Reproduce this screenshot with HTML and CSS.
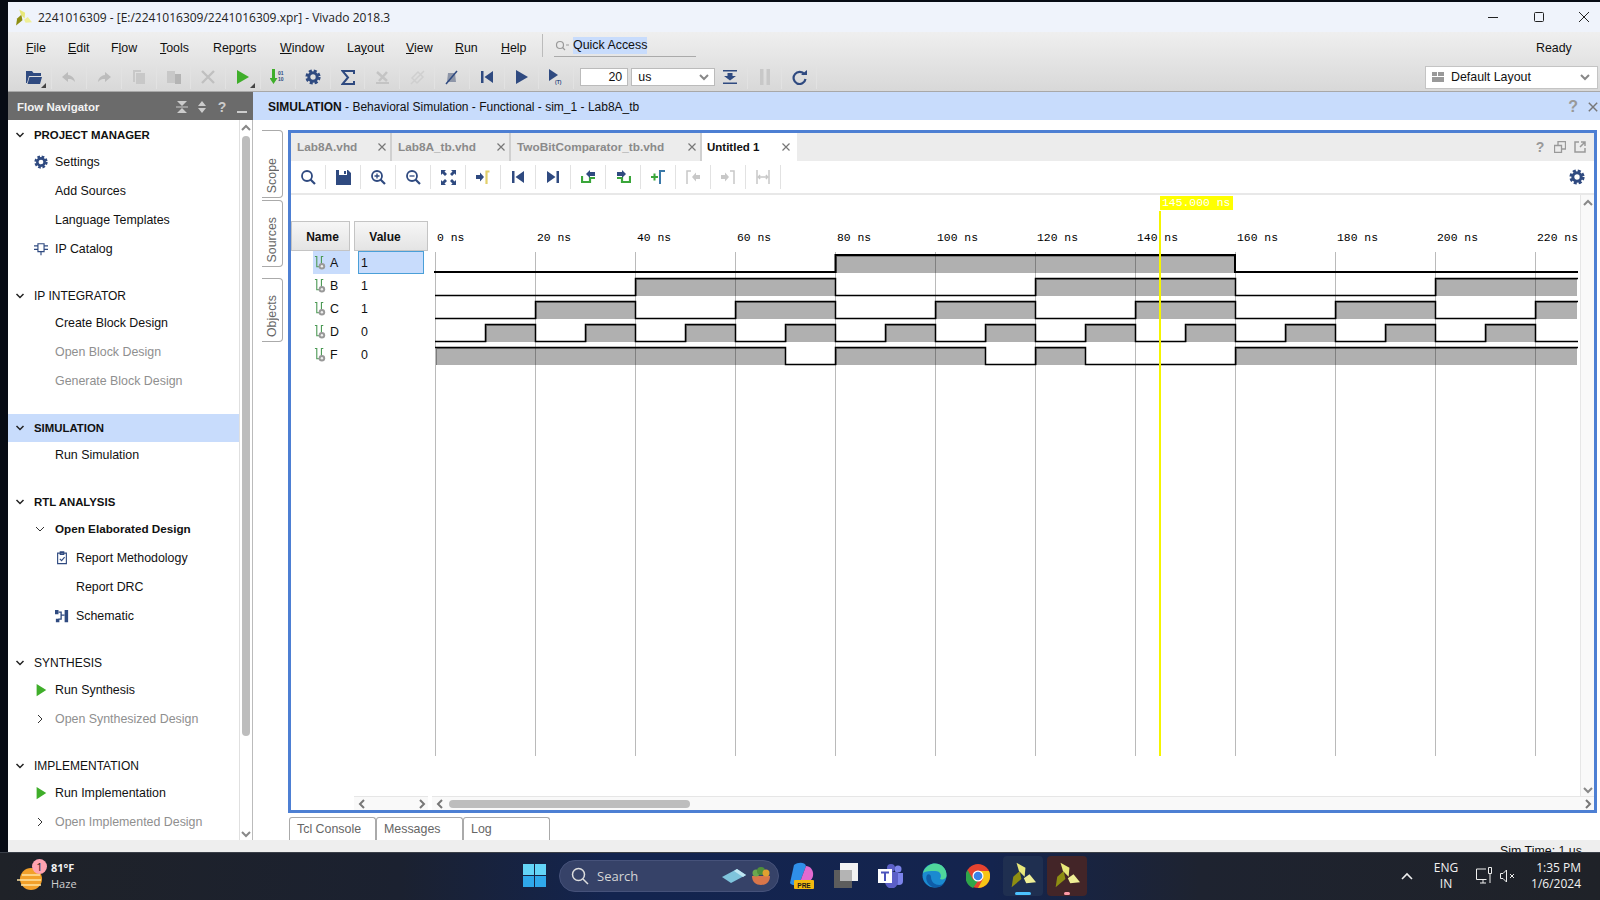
FILE: index.html
```html
<!DOCTYPE html>
<html lang="en">

<head>
  <meta charset="UTF-8">
  <title>2241016309 - Vivado 2018.3</title>
  <link rel="stylesheet" href="styles.css">
</head>

<body>
  <!-- shared icons -->
  <svg class="defs" width="0" height="0">
    <symbol id="logo" viewBox="0 0 16 16">
      <path fill="#8e8e12" d="M1 15.500 2 9 6 5.500 7 10.500z" />
      <path fill="#e8e87a" d="M4 .5 9.500 3.500 9 9 5.500 5.500z" />
      <path fill="#efef96" d="M8.500 10 12 7.500 16 12.500 10 13z" />
    </symbol>
    <symbol id="chev" viewBox="0 0 10 10">
      <path fill="none" stroke="#222" stroke-width="1.500" d="M1.500 3 5 6.500 8.500 3" />
    </symbol>
    <symbol id="chev-thin" viewBox="0 0 10 10">
      <path fill="none" stroke="#333" stroke-width="1" d="M1 3 5 7 9 3" />
    </symbol>
    <symbol id="chev-right" viewBox="0 0 10 10">
      <path fill="none" stroke="#333" stroke-width="1" d="M3 1 7 5 3 9" />
    </symbol>
    <symbol id="arrow-up" viewBox="0 0 10 10">
      <path fill="none" stroke="#888" stroke-width="2" d="M1 7 5 3 9 7" />
    </symbol>
    <symbol id="arrow-down" viewBox="0 0 10 10">
      <path fill="none" stroke="#888" stroke-width="2" d="M1 3 5 7 9 3" />
    </symbol>
    <symbol id="arrow-left" viewBox="0 0 10 10">
      <path fill="none" stroke="#777" stroke-width="2" d="M7 1 3 5 7 9" />
    </symbol>
    <symbol id="arrow-right" viewBox="0 0 10 10">
      <path fill="none" stroke="#777" stroke-width="2" d="M3 1 7 5 3 9" />
    </symbol>
    <symbol id="gear" viewBox="0 0 16 16">
      <circle cx="8" cy="8" r="4.200" fill="none" stroke="#2f4a80" stroke-width="3" />
      <circle cx="8" cy="8" r="6.300" fill="none" stroke="#2f4a80" stroke-width="2.600" stroke-dasharray="3 1.950" />
    </symbol>
    <symbol id="close" viewBox="0 0 10 10">
      <path stroke="#777" stroke-width="1.200" d="M1.500 1.500 8.500 8.500M8.500 1.500 1.500 8.500" />
    </symbol>
    <symbol id="play" viewBox="0 0 16 16">
      <path fill="#3fae2a" d="M3 1 14 8 3 15z" />
    </symbol>
    <symbol id="first" viewBox="0 0 16 16">
      <path fill="#2f4a80" d="M2 2h2.500v12H2zM14 2v12L5.500 8z" />
    </symbol>
    <symbol id="last" viewBox="0 0 16 16">
      <path fill="#2f4a80" d="M14 2h-2.500v12H14zM2 2v12l8.500-6z" />
    </symbol>
    <symbol id="signal" viewBox="0 0 14 16">
      <path fill="none" stroke="#4c9a55" stroke-width="1.200" d="M1 1h2v11h3M10 1h-2v10" />
      <circle cx="8.500" cy="11.500" r="3.500" fill="#999" />
      <circle cx="8.500" cy="11.500" r="1.300" fill="#eee" />
    </symbol>
    <symbol id="magnifier" viewBox="0 0 16 16">
      <circle cx="7" cy="7" r="5" fill="none" stroke="#2f4a80" stroke-width="1.800" />
      <path stroke="#2f4a80" stroke-width="2.200" d="M10.500 10.500 15 15" />
    </symbol>
    <symbol id="bowl" viewBox="0 0 22 20">
      <path fill="#d9764a" d="M2 10h18c0 6-4 9-9 9s-9-3-9-9z" />
      <circle cx="6" cy="7" r="3.500" fill="#6aa84f" />
      <circle cx="11" cy="5" r="4" fill="#4f8f3a" />
      <circle cx="16" cy="7" r="3.500" fill="#e0a030" />
    </symbol>
  </svg>

  <div class="window">
    <header class="titlebar">
      <svg class="title-logo"><use href="#logo" /></svg>
      <span class="title-text">2241016309 - [E:/2241016309/2241016309.xpr] - Vivado 2018.3</span>
      <div class="win-btns">
        <svg width="12" height="12" viewBox="0 0 12 12"><path stroke="#222" d="M1 6.500h10" /></svg>
        <svg width="12" height="12" viewBox="0 0 12 12"><rect x="1.500" y="1.500" width="9" height="9" rx="1" fill="none" stroke="#222" /></svg>
        <svg width="12" height="12" viewBox="0 0 12 12"><path stroke="#222" d="M1 1 11 11M11 1 1 11" /></svg>
      </div>
    </header>

    <div class="topbar">
      <nav class="menubar">
        <a class="m-file"><u>F</u>ile</a>
        <a class="m-edit"><u>E</u>dit</a>
        <a class="m-flow">F<u>l</u>ow</a>
        <a class="m-tools"><u>T</u>ools</a>
        <a class="m-reports">Rep<u>o</u>rts</a>
        <a class="m-window"><u>W</u>indow</a>
        <a class="m-layout">La<u>y</u>out</a>
        <a class="m-view"><u>V</u>iew</a>
        <a class="m-run"><u>R</u>un</a>
        <a class="m-help"><u>H</u>elp</a>
        <div class="quick">
          <svg width="14" height="12" viewBox="0 0 14 12">
            <circle cx="5" cy="5" r="3.500" fill="none" stroke="#999" stroke-width="1.200" />
            <path stroke="#999" stroke-width="1.200" d="M7.500 7.500 10 10M11 5h3" />
          </svg>
          <span class="quick-text">Quick Access</span>
        </div>
        <span class="ready">Ready</span>
      </nav>

      <div class="toolbar">
        <span class="tool corner">
          <svg width="16" height="15" viewBox="0 0 16 15"><path fill="#2f4a80" d="M0 1h6l1.500 2H15v3H3L1 13H0z" /><path fill="#2f4a80" d="M3.500 7H16l-2 7H1.500z" /></svg>
        </span>
        <span class="tool">
          <svg width="16" height="12" viewBox="0 0 16 12"><path fill="#bcbcbc" d="M7 1 1 6l6 5V8c3 0 5 .5 7 3-.5-4-3-6.500-7-7z" /></svg>
        </span>
        <span class="tool">
          <svg width="16" height="12" viewBox="0 0 16 12"><path fill="#bcbcbc" d="M9 1l6 5-6 5V8c-3 0-5 .5-7 3 .5-4 3-6.500 7-7z" /></svg>
        </span>
        <span class="tool">
          <svg width="12" height="14" viewBox="0 0 12 14"><path fill="#c8c8c8" d="M0 0h8v2H2v10H0z" /><path fill="#c8c8c8" d="M3 3h9v11H3z" /></svg>
        </span>
        <span class="tool">
          <svg width="14" height="14" viewBox="0 0 14 14"><path fill="#c8c8c8" d="M0 1h8v12H0z" /><path fill="#b4b4b4" d="M8 4h6v10H8z" /></svg>
        </span>
        <span class="tool">
          <svg width="14" height="14" viewBox="0 0 14 14"><path stroke="#c0c0c0" stroke-width="2.400" d="M1 1 13 13M13 1 1 13" /></svg>
        </span>
        <span class="tool corner">
          <svg width="14" height="16" viewBox="0 0 14 16"><path fill="#3fae2a" d="M1 1 13 8 1 15z" /></svg>
        </span>
        <span class="tool">
          <svg width="16" height="16" viewBox="0 0 16 16"><path fill="#3fae2a" d="M2 0h3v9h2.500L3.500 15-.5 9H2z" /><text class="bits" x="8" y="6">01</text><text class="bits" x="8" y="12">10</text></svg>
        </span>
        <span class="tool"><svg width="16" height="16"><use href="#gear" /></svg></span>
        <span class="tool">
          <svg width="14" height="15" viewBox="0 0 14 15"><path fill="none" stroke="#2f4a80" stroke-width="2" d="M13 4V1H1.500L7 7.500 1.500 14H13v-3" /></svg>
        </span>
        <span class="tool">
          <svg width="15" height="15" viewBox="0 0 15 15"><path fill="#c4c4c4" d="M1 12h13v2H1z" /><path stroke="#c4c4c4" stroke-width="2.500" d="M2 2 12 11M12 2 4 11" /></svg>
        </span>
        <span class="tool">
          <svg width="15" height="15" viewBox="0 0 15 15"><path fill="none" stroke="#cfcfcf" stroke-width="1.500" d="M2 8 8 2l5 5-6 6zM1 14 14 1" /></svg>
        </span>
        <span class="tool">
          <svg width="15" height="15" viewBox="0 0 15 15"><path fill="#8e96a8" d="M4 3h7l1 9H3z" /><path stroke="#2f4a80" stroke-width="1.500" d="M2 14 13 1" /></svg>
        </span>
        <span class="tool"><svg width="16" height="16"><use href="#first" /></svg></span>
        <span class="tool">
          <svg width="14" height="14" viewBox="0 0 14 14"><path fill="#2f4a80" d="M1 0 13 7 1 14z" /></svg>
        </span>
        <span class="tool">
          <svg width="16" height="16" viewBox="0 0 16 16"><path fill="#2f4a80" d="M1 0 10 6 1 12z" /><text class="bits" x="7" y="15">(T)</text></svg>
        </span>

        <div class="run-time">
          <span class="num-input">20</span>
          <span class="unit-select">us
            <svg width="12" height="10"><use href="#arrow-down" /></svg>
          </span>
        </div>
        <span class="tool t-first">
          <svg width="14" height="14" viewBox="0 0 14 14"><path fill="#2f4a80" d="M0 0h14v1.500H0zM4.500 3h5v3H13L7 10.500 1 6h3.500zM0 12.500h14V14H0z" /></svg>
        </span>
        <span class="tool t-second">
          <svg width="10" height="16" viewBox="0 0 10 16"><path fill="#c8c8c8" d="M0 0h3.500v16H0zM6.500 0H10v16H6.500z" /></svg>
        </span>
        <span class="tool t-third">
          <svg width="15" height="15" viewBox="0 0 15 15"><path fill="none" stroke="#2f4a80" stroke-width="2.200" d="M12.500 4.500A6 6 0 1 0 13.500 9" /><path fill="#2f4a80" d="M9 5h6V0z" /></svg>
        </span>

        <div class="layout-select">
          <svg width="12" height="10" viewBox="0 0 12 10"><path fill="#999" d="M0 0h5v4H0zM6 0h6v4H6zM0 5h12v5H0z" /></svg>
          <span>Default Layout</span>
          <svg class="layout-arrow" width="12" height="10"><use href="#arrow-down" /></svg>
        </div>
      </div>
    </div>

    <div class="work">
      <aside class="flow-nav">
        <div class="flow-head">
          <span>Flow Navigator</span>
          <div class="flow-icons">
            <svg width="12" height="12" viewBox="0 0 12 12"><path fill="#ccc" d="M1 0h10L6 5zM1 12h10L6 7zM0 5.500h12v1H0z" /></svg>
            <svg width="12" height="12" viewBox="0 0 12 12"><path fill="#ccc" d="M2 5h8L6 0zM2 7h8l-4 5z" /></svg>
            <b>?</b>
            <svg width="12" height="12" viewBox="0 0 12 12"><path fill="#ccc" d="M1 10h10v2H1z" /></svg>
          </div>
        </div>
        <div class="flow-body">
          <div class="flow-list">
            <section class="nav-section">
              <h4 class="nav-head strong"><svg><use href="#chev" /></svg>PROJECT MANAGER</h4>
              <a class="nav-item">
                <svg class="nav-icon"><use href="#gear" /></svg>Settings
              </a>
              <a class="nav-item">Add Sources</a>
              <a class="nav-item">Language Templates</a>
              <a class="nav-item">
                <svg class="nav-icon" viewBox="0 0 16 16"><path fill="none" stroke="#2f4a80" stroke-width="1.300" d="M4.500 2h7v9h-7zM8 11v4M0 4.500h4.500M0 8.500h4.500M11.500 4.500H16M11.500 8.500H16" /></svg>IP Catalog
              </a>
            </section>
            <section class="nav-section">
              <h4 class="nav-head"><svg><use href="#chev" /></svg>IP INTEGRATOR</h4>
              <a class="nav-item">Create Block Design</a>
              <a class="nav-item off">Open Block Design</a>
              <a class="nav-item off">Generate Block Design</a>
            </section>
            <section class="nav-section">
              <h4 class="nav-head strong current"><svg><use href="#chev" /></svg>SIMULATION</h4>
              <a class="nav-item">Run Simulation</a>
            </section>
            <section class="nav-section">
              <h4 class="nav-head strong"><svg><use href="#chev" /></svg>RTL ANALYSIS</h4>
              <a class="nav-item bold">
                <svg class="nav-toggle"><use href="#chev-thin" /></svg>Open Elaborated Design
              </a>
              <a class="nav-item sub">
                <svg class="nav-icon" viewBox="0 0 16 16"><path fill="none" stroke="#2f4a80" stroke-width="1.300" d="M3 2.500h10v12H3zM6 1h4v3H6zM5.500 9l2 2 3.500-4" /></svg>Report Methodology
              </a>
              <a class="nav-item sub">Report DRC</a>
              <a class="nav-item sub">
                <svg class="nav-icon" viewBox="0 0 16 16"><path fill="#2f4a80" d="M0 1h4v5H0zM11 1h4v14h-4zM1 11h4v4H1z" /><path fill="none" stroke="#2f4a80" stroke-width="1.500" d="M4 3.500h3v8H4M7 7h4" /></svg>Schematic
              </a>
            </section>
            <section class="nav-section">
              <h4 class="nav-head"><svg><use href="#chev" /></svg>SYNTHESIS</h4>
              <a class="nav-item">
                <svg class="nav-icon"><use href="#play" /></svg>Run Synthesis
              </a>
              <a class="nav-item off">
                <svg class="nav-toggle"><use href="#chev-right" /></svg>Open Synthesized Design
              </a>
            </section>
            <section class="nav-section">
              <h4 class="nav-head"><svg><use href="#chev" /></svg>IMPLEMENTATION</h4>
              <a class="nav-item">
                <svg class="nav-icon"><use href="#play" /></svg>Run Implementation
              </a>
              <a class="nav-item off">
                <svg class="nav-toggle"><use href="#chev-right" /></svg>Open Implemented Design
              </a>
            </section>
          </div>
          <div class="flow-scroll">
            <svg width="10" height="10"><use href="#arrow-up" /></svg>
            <div class="flow-track"><div class="flow-thumb"></div></div>
            <svg width="10" height="10"><use href="#arrow-down" /></svg>
          </div>
        </div>
      </aside>

      <main class="sim">
        <div class="sim-head">
          <span><b>SIMULATION</b> - Behavioral Simulation - Functional - sim_1 - Lab8A_tb</span>
          <div class="sim-head-icons">
            <b>?</b>
            <svg width="12" height="12"><use href="#close" /></svg>
          </div>
        </div>
        <div class="sim-body">
          <div class="side-tabs">
            <div class="side-tab t-scope"><span>Scope</span></div>
            <div class="side-tab t-sources"><span>Sources</span></div>
            <div class="side-tab t-objects"><span>Objects</span></div>
          </div>

          <div class="frame-col">
            <div class="frame">
              <div class="tabs">
                <div class="tab w1"><span>Lab8A.vhd</span><svg width="10" height="10"><use href="#close" /></svg></div>
                <div class="tab w2"><span>Lab8A_tb.vhd</span><svg width="10" height="10"><use href="#close" /></svg></div>
                <div class="tab w3"><span>TwoBitComparator_tb.vhd</span><svg width="10" height="10"><use href="#close" /></svg></div>
                <div class="tab w4 active"><span>Untitled 1</span><svg width="10" height="10"><use href="#close" /></svg></div>
                <div class="tabs-right">
                  <b>?</b>
                  <svg width="12" height="12" viewBox="0 0 12 12"><path fill="none" stroke="#999" stroke-width="1.300" d="M.5 4.500h7v7h-7zM4 4.500V.5h7.500V8H7.500" /></svg>
                  <svg width="12" height="12" viewBox="0 0 12 12"><path fill="none" stroke="#999" stroke-width="1.500" d="M5 1H1v10h10V7M6 6l5-5M7 1h4v4" /></svg>
                </div>
              </div>

              <div class="wave-tools">
                <span class="wtool"><svg width="16" height="16"><use href="#magnifier" /></svg></span>
                <span class="wtool"><svg width="15" height="15" viewBox="0 0 15 15"><path fill="#2f4a80" d="M0 0h12l3 3v12H0zM3 0v5h8V0zM8 1h2v3H8z" fill-rule="evenodd" /></svg></span>
                <span class="wtool"><svg width="16" height="16" viewBox="0 0 16 16"><use href="#magnifier" /><path stroke="#2f4a80" stroke-width="1.300" d="M4.500 7h5M7 4.500v5" /></svg></span>
                <span class="wtool"><svg width="16" height="16" viewBox="0 0 16 16"><use href="#magnifier" /><path stroke="#2f4a80" stroke-width="1.300" d="M4.500 7h5" /></svg></span>
                <span class="wtool"><svg width="15" height="15" viewBox="0 0 15 15"><path fill="#2f4a80" d="M0 0h5L3.500 1.500 6 4 4 6 1.500 3.500 0 5zM15 0v5l-1.500-1.500L11 6 9 4l2.500-2.500L10 0zM0 15v-5l1.500 1.500L4 9l2 2-2.500 2.500L5 15zM15 15h-5l1.500-1.500L9 11l2-2 2.500 2.500L15 10z" /></svg></span>
                <span class="wtool"><svg width="14" height="14" viewBox="0 0 14 14"><path fill="#2f4a80" d="M0 5h4V2.500L8 7 4 11.500V9H0z" /><path fill="none" stroke="#e2cf6a" stroke-width="2.200" d="M13.500 1.500h-3V14" /></svg></span>
                <span class="wtool"><svg width="16" height="16"><use href="#first" /></svg></span>
                <span class="wtool"><svg width="16" height="16"><use href="#last" /></svg></span>
                <span class="wtool"><svg width="15" height="14" viewBox="0 0 15 14"><path fill="none" stroke="#3aa63a" stroke-width="2.200" d="M1 6v6h8V8h5" /><path fill="#2f4a80" d="M14 2v4H9v2L5 4l4-4v2z" /></svg></span>
                <span class="wtool"><svg width="15" height="14" viewBox="0 0 15 14"><path fill="none" stroke="#3aa63a" stroke-width="2.200" d="M14 6v6H6V8H1" /><path fill="#2f4a80" d="M1 2v4h5v2l4-4-4-4v2z" /></svg></span>
                <span class="wtool"><svg width="14" height="14" viewBox="0 0 14 14"><path stroke="#3aa63a" stroke-width="2" d="M0 7h7M3.500 3.500v7" /><path fill="none" stroke="#3a78a8" stroke-width="2" d="M14 1H9v13" /></svg></span>
                <span class="wtool"><svg width="14" height="14" viewBox="0 0 14 14"><path fill="none" stroke="#c8c8c8" stroke-width="1.500" d="M5 1H1v13" /><path fill="#c8c8c8" d="M14 5h-4V2.500L6 7l4 4.500V9h4z" /></svg></span>
                <span class="wtool"><svg width="14" height="14" viewBox="0 0 14 14"><path fill="#c8c8c8" d="M0 5h4V2.500L8 7 4 11.500V9H0z" /><path fill="none" stroke="#c8c8c8" stroke-width="1.500" d="M9 1h4v13" /></svg></span>
                <span class="wtool"><svg width="14" height="14" viewBox="0 0 14 14"><path fill="none" stroke="#c8c8c8" stroke-width="1.500" d="M1 0v14M13 0v14M2.500 7h9M4 5 2.500 7 4 9M10 5l1.500 2L10 9" /></svg></span>
                <span class="wtool-gear"><svg width="16" height="16"><use href="#gear" /></svg></span>
              </div>

              <div class="viewer">
                <div class="signals">
                  <div class="sig-head">
                    <div class="col-btn c-name">Name</div>
                    <div class="col-btn c-value">Value</div>
                  </div>
                  <div class="sig-row selected">
                    <div class="sig-name"><svg><use href="#signal" /></svg>A</div>
                    <div class="sig-val">1</div>
                  </div>
                  <div class="sig-row">
                    <div class="sig-name"><svg><use href="#signal" /></svg>B</div>
                    <div class="sig-val">1</div>
                  </div>
                  <div class="sig-row">
                    <div class="sig-name"><svg><use href="#signal" /></svg>C</div>
                    <div class="sig-val">1</div>
                  </div>
                  <div class="sig-row">
                    <div class="sig-name"><svg><use href="#signal" /></svg>D</div>
                    <div class="sig-val">0</div>
                  </div>
                  <div class="sig-row">
                    <div class="sig-name"><svg><use href="#signal" /></svg>F</div>
                    <div class="sig-val">0</div>
                  </div>
                </div>

                <!-- viewBox uses page coordinates, 5px = 1ns, 0ns at x=435 -->
                <svg class="waves" viewBox="430 195 1150 601" width="1150" height="601">
                  <g class="ruler">
                    <text x="437" y="241">0 ns</text>
                    <text x="537" y="241">20 ns</text>
                    <text x="637" y="241">40 ns</text>
                    <text x="737" y="241">60 ns</text>
                    <text x="837" y="241">80 ns</text>
                    <text x="937" y="241">100 ns</text>
                    <text x="1037" y="241">120 ns</text>
                    <text x="1137" y="241">140 ns</text>
                    <text x="1237" y="241">160 ns</text>
                    <text x="1337" y="241">180 ns</text>
                    <text x="1437" y="241">200 ns</text>
                    <text x="1537" y="241">220 ns</text>
                  </g>

                  <g class="w-fill">
                    <path d="M835 256H1235V273H835Z" />
                    <path d="M636 279H835V296H636ZM1036 279H1235V296H1036ZM1436 279H1577V296H1436Z" />
                    <path d="M536 302H635V319H536ZM736 302H835V319H736ZM936 302H1035V319H936ZM1136 302H1235V319H1136ZM1336 302H1435V319H1336ZM1536 302H1577V319H1536Z" />
                    <path d="M486 325H535V342H486ZM586 325H635V342H586ZM686 325H735V342H686ZM786 325H835V342H786ZM886 325H935V342H886ZM986 325H1035V342H986ZM1086 325H1135V342H1086ZM1186 325H1235V342H1186ZM1286 325H1335V342H1286ZM1386 325H1435V342H1386ZM1486 325H1535V342H1486Z" />
                    <path d="M436 348H785V365H436ZM836 348H985V365H836ZM1036 348H1085V365H1036ZM1236 348H1577V365H1236Z" />
                  </g>
                  <g class="w-shade">
                    <path d="M836.500 273V256.500H1234" />
                    <path d="M636.500 296V279.500H835M1036.500 296V279.500H1235M1436.500 296V279.500H1577" />
                    <path d="M536.500 319V302.500H635M736.500 319V302.500H835M936.500 319V302.500H1035M1136.500 319V302.500H1235M1336.500 319V302.500H1435M1536.500 319V302.500H1577" />
                    <path d="M486.500 342V325.500H535M586.500 342V325.500H635M686.500 342V325.500H735M786.500 342V325.500H835M886.500 342V325.500H935M986.500 342V325.500H1035M1086.500 342V325.500H1135M1186.500 342V325.500H1235M1286.500 342V325.500H1335M1386.500 342V325.500H1435M1486.500 342V325.500H1535" />
                    <path d="M436.500 365V348.500H785M836.500 365V348.500H985M1036.500 365V348.500H1085M1236.500 365V348.500H1577" />
                  </g>
                  <path class="grid" d="M435.500 252V756M535.500 252V756M635.500 252V756M735.500 252V756M835.500 252V756M935.500 252V756M1035.500 252V756M1135.500 252V756M1235.500 252V756M1335.500 252V756M1435.500 252V756M1535.500 252V756" />
                  <path class="w-line thick" d="M434 272H835.500V255H1235V272H1578" />
                  <path class="w-line" d="M435 295.500H635.500V278.500H835.500V295.500H1035.500V278.500H1235.500V295.500H1435.500V278.500H1578" />
                  <path class="w-line" d="M435 318.500H535.500V301.500H635.500V318.500H735.500V301.500H835.500V318.500H935.500V301.500H1035.500V318.500H1135.500V301.500H1235.500V318.500H1335.500V301.500H1435.500V318.500H1535.500V301.500H1578" />
                  <path class="w-line" d="M435 341.500H485.500V324.500H535.500V341.500H585.500V324.500H635.500V341.500H685.500V324.500H735.500V341.500H785.500V324.500H835.500V341.500H885.500V324.500H935.500V341.500H985.500V324.500H1035.500V341.500H1085.500V324.500H1135.500V341.500H1185.500V324.500H1235.500V341.500H1285.500V324.500H1335.500V341.500H1385.500V324.500H1435.500V341.500H1485.500V324.500H1535.500V341.500H1578" />
                  <path class="w-line" d="M435 347.500H785.500V364.500H835.500V347.500H985.500V364.500H1035.500V347.500H1085.500V364.500H1235.500V347.500H1578" />

                  <path class="cursor" d="M1160 211V756" />
                  <rect class="cursor-tag" x="1160" y="196" width="73" height="14" />
                  <text class="cursor-text" x="1162" y="206">145.000 ns</text>
                </svg>

                <div class="v-scroll">
                  <svg width="10" height="10"><use href="#arrow-up" /></svg>
                  <svg width="10" height="10"><use href="#arrow-down" /></svg>
                </div>
              </div>

              <div class="h-bars">
                <div class="h-name">
                  <svg width="10" height="10"><use href="#arrow-left" /></svg>
                  <svg width="10" height="10"><use href="#arrow-right" /></svg>
                </div>
                <div class="h-wave">
                  <svg width="10" height="10"><use href="#arrow-left" /></svg>
                  <div class="h-track"><div class="h-thumb"></div></div>
                  <svg width="10" height="10"><use href="#arrow-right" /></svg>
                </div>
              </div>
            </div>

            <div class="bottom-tabs">
              <div class="b-tab">Tcl Console</div>
              <div class="b-tab">Messages</div>
              <div class="b-tab">Log</div>
            </div>
          </div>
        </div>
      </main>
    </div>

    <div class="status"><span>Sim Time: 1 us</span></div>
  </div>

  <footer class="taskbar">
    <div class="weather">
      <div class="sun">
        <svg width="30" height="26" viewBox="0 0 30 26"><circle cx="15" cy="13" r="11" fill="#f2a02a" /><path stroke="#ffe2a0" stroke-width="1.500" d="M6 9h18M1 14h24M5 19h20" /></svg>
        <span class="badge">1</span>
      </div>
      <div class="weather-text"><b>81°F</b><span>Haze</span></div>
    </div>

    <svg class="start" width="23" height="23" viewBox="0 0 23 23">
      <path fill="#63d4f7" d="M0 0h11v11H0zM12 0h11v11H12z" />
      <path fill="#2fa8ea" d="M0 12h11v11H0zM12 12h11v11H12z" />
    </svg>

    <div class="search">
      <svg width="18" height="18" viewBox="0 0 18 18"><circle cx="7.500" cy="7.500" r="6" fill="none" stroke="#ddd" stroke-width="1.500" /><path stroke="#ddd" stroke-width="1.500" d="M12 12l5 5" /></svg>
      <span>Search</span>
      <svg class="search-art" width="26" height="16" viewBox="0 0 26 16"><path fill="#7fc4dc" d="M0 9 15 1l9 6L9 15z" /><path fill="#bfe6f2" d="M15 1l9 6-3 2-9-6z" /></svg>
      <svg width="22" height="20"><use href="#bowl" /></svg>
    </div>

    <span class="app">
      <svg width="26" height="28" viewBox="0 0 26 28">
        <path fill="#2f8fe8" d="M5 3 C9 0 16 0 17 4 L11 20 C8 24 3 24 1 21z" />
        <path fill="#e26ad0" d="M17 4 C21 4 25 8 24 14 C23 18 20 20 17 20 L11 20z" />
        <rect x="5" y="18" width="20" height="9" rx="1" fill="#f2b90f" />
        <text class="pre" x="15" y="25.500">PRE</text>
      </svg>
    </span>
    <span class="app">
      <svg width="24" height="25" viewBox="0 0 24 25"><rect x="0" y="7" width="18" height="18" fill="#5d5d5d" /><rect x="6" y="0" width="18" height="18" fill="#f2f2f2" /><rect x="6" y="7" width="12" height="11" fill="#b4b4b4" /></svg>
    </span>
    <span class="app">
      <svg width="25" height="24" viewBox="0 0 25 24">
        <circle cx="20" cy="5" r="3.500" fill="#7b83eb" /><circle cx="13" cy="4" r="4" fill="#5b5fc7" />
        <path fill="#7b83eb" d="M17 9h8v8a4 4 0 0 1-8 0z" /><path fill="#5b5fc7" d="M7 8h13v10a6 6 0 0 1-13 0z" />
        <rect x="0" y="5" width="14" height="14" fill="#fff" />
        <path fill="#4b53bc" d="M3 7.500h8v2H8V17H6V9.500H3z" />
      </svg>
    </span>
    <span class="app">
      <svg width="25" height="25" viewBox="0 0 25 25">
        <circle cx="12.500" cy="12.500" r="12" fill="#1b8ad0" />
        <path fill="#4fd69c" d="M1 10C3 3 9 .5 13 .5 20 .5 25 6 24.500 13c-.3 3-4 4-6.500 3 2-3 1-8-5-8-5 0-9 0-12 2z" />
        <path fill="#0f5da8" d="M9 14c0 5 4 8 8.500 8 2 0 4-.7 5-2-3 4.500-9 5.500-13 3.500C5 21 3 16 5 12c1-1.500 4-1 4 2z" />
      </svg>
    </span>
    <span class="app">
      <svg width="24" height="24" viewBox="0 0 24 24">
        <circle cx="12" cy="12" r="12" fill="#e5432f" />
        <path fill="#f6c416" d="M12 7h11a12 12 0 0 1-11 17l5-9z" />
        <path fill="#2fa64a" d="M1.600 6 7 15.500l5 1.500-5 7A12 12 0 0 1 1.600 6z" />
        <circle cx="12" cy="12" r="5.500" fill="#fff" /><circle cx="12" cy="12" r="4.300" fill="#3b82e6" />
      </svg>
    </span>
    <span class="pinned blue">
      <svg width="26" height="26"><use href="#logo" /></svg>
      <i></i>
    </span>
    <span class="pinned red">
      <svg width="26" height="26"><use href="#logo" /></svg>
      <i></i>
    </span>

    <div class="tray">
      <svg width="14" height="10" viewBox="0 0 14 10"><path fill="none" stroke="#eee" stroke-width="1.600" d="M2 8 7 3l5 5" /></svg>
      <div class="lang">ENG<br>IN</div>
      <svg width="17" height="17" viewBox="0 0 17 17"><path fill="none" stroke="#eee" d="M10 2H.5v10.500h10M4 16h6M7 13v3" /><path fill="#1d2026" stroke="#eee" d="M12.500.5h3v6h-3zM14 7v9" /></svg>
      <svg width="16" height="14" viewBox="0 0 16 14"><path fill="none" stroke="#eee" d="M.5 4.500h2.500L6.500 1v12L3 9.500H.5zM10 5l4 4M14 5l-4 4" /></svg>
      <div class="clock">1:35 PM<br>1/6/2024</div>
    </div>
  </footer>
</body>

</html>
```
FILE: styles.css
```css
* {
  box-sizing: border-box;
}

body {
  margin: 0;
  width: 1600px;
  height: 900px;
  overflow: hidden;
  background-color: #070b14;
  font-family: "Liberation Sans", Arial, sans-serif;
  font-size: 12.4px;
  color: #111;
  display: flex;
  flex-direction: column;
}

.defs {
  position: absolute;
}

.window {
  flex: 1;
  min-height: 0;
  margin: 2px 0 0 8px;
  display: flex;
  flex-direction: column;
}

/* title bar */
.titlebar {
  height: 30px;
  background-color: #eff3fb;
  display: flex;
  align-items: center;
  font-family: "Open Sans", sans-serif;
  font-size: 12px;
  color: #222;
}

.title-logo {
  width: 17px;
  height: 17px;
  margin-left: 7px;
  margin-right: -1px;
}

.title-text {
  margin-left: 7px;
}

.win-btns {
  margin-left: auto;
  margin-right: 10px;
  display: flex;
  gap: 33.5px;
}

/* menu and toolbar */
.topbar {
  height: 60px;
  background: linear-gradient(#efefef, #d8d8d8);
  border-bottom: 1px solid #a8a8a8;
}

.menubar {
  height: 32px;
  position: relative;
}

.menubar a {
  position: absolute;
  top: 9px;
}

.m-file { left: 18px; }
.m-edit { left: 60px; }
.m-flow { left: 103px; }
.m-tools { left: 152px; }
.m-reports { left: 205px; }
.m-window { left: 272px; }
.m-layout { left: 339px; }
.m-view { left: 398px; }
.m-run { left: 447px; }
.m-help { left: 493px; }

.quick {
  position: absolute;
  left: 534px;
  top: 2px;
  width: 154px;
  height: 23px;
  padding-left: 12px;
  border-left: 1px solid #bbb;
  display: flex;
  align-items: center;
  gap: 4px;
}

.quick::after {
  content: "";
  position: absolute;
  left: 11px;
  right: 0;
  bottom: 0;
  border-bottom: 1px solid #aaa;
}

.quick-text {
  background-color: #c8dcfc;
  padding: 1px 0;
  line-height: 15px;
}

.ready {
  position: absolute;
  left: 1528px;
  top: 9px;
}

.toolbar {
  height: 26px;
  padding: 0 2px 0 9.5px;
  display: flex;
  align-items: center;
}

.tool {
  width: 34.8px;
  height: 24px;
  border-right: 1px solid #e2e2e2;
  display: flex;
  align-items: center;
  justify-content: center;
  position: relative;
}

.corner::after {
  content: "";
  position: absolute;
  right: 5px;
  bottom: 1px;
  border-left: 5px solid transparent;
  border-bottom: 5px solid #444;
}

.bits {
  font-family: "Liberation Sans", sans-serif;
  font-size: 5px;
  font-weight: bold;
  fill: #2f4a80;
}

.run-time {
  margin-left: 6px;
  display: flex;
  gap: 3px;
}

.num-input {
  width: 48px;
  height: 18px;
  line-height: 16px;
  background-color: #fff;
  border: 1px solid #bbb;
  padding-right: 5px;
  text-align: right;
}

.unit-select {
  width: 84px;
  height: 18px;
  line-height: 16px;
  background-color: #fff;
  border: 1px solid #bbb;
  padding: 0 4px 0 6px;
  display: flex;
  align-items: center;
  justify-content: space-between;
}

.t-first { width: 33px; padding-right: 3px; }
.t-second { width: 34px; }
.t-third { width: 35px; }

.layout-select {
  margin-left: auto;
  width: 173px;
  height: 23px;
  background-color: #fff;
  border: 1px solid #c4c4c4;
  padding: 0 6px;
  display: flex;
  align-items: center;
  gap: 7px;
}

.layout-arrow {
  margin-left: auto;
}

/* main area */
.work {
  flex: 1;
  min-height: 0;
  display: flex;
  background-color: #fff;
}

.flow-nav {
  width: 245px;
  border-right: 1px solid #bbb;
  display: flex;
  flex-direction: column;
}

.flow-head {
  height: 28px;
  background-color: #6b6b6b;
  color: #f2f2f2;
  font-size: 11.5px;
  font-weight: bold;
  padding: 1px 0 0 9px;
  margin-right: -1px;
  display: flex;
  align-items: center;
  justify-content: space-between;
}

.flow-icons {
  display: flex;
  align-items: center;
  gap: 8px;
  margin-right: 5px;
}

.flow-icons b {
  width: 12px;
  text-align: center;
  font-size: 14px;
  color: #ccc;
}

.flow-body {
  flex: 1;
  min-height: 0;
  display: flex;
}

.flow-list {
  flex: 1;
  padding-top: 3px;
}

.nav-section {
  margin-bottom: 21px;
}

.nav-head {
  margin: 0;
  height: 24px;
  padding-left: 7px;
  font-size: 12px;
  font-weight: normal;
  display: flex;
  align-items: center;
  gap: 9px;
}

.nav-head svg {
  width: 10px;
  height: 10px;
}

.nav-head.strong {
  font-size: 11.4px;
  font-weight: bold;
}

.nav-head.current {
  height: 28px;
  margin: -2px 0;
  background-color: #c8dcfc;
}

.nav-item {
  height: 29px;
  padding-left: 47px;
  display: flex;
  align-items: center;
  position: relative;
}

.nav-item.sub {
  padding-left: 68px;
}

.nav-item.off {
  color: #8f8f8f;
}

.nav-item.bold {
  font-size: 11.7px;
  font-weight: bold;
}

.nav-icon {
  position: absolute;
  left: 26px;
  width: 14px;
  height: 14px;
}

.nav-item.sub .nav-icon {
  left: 47px;
}

.nav-toggle {
  position: absolute;
  left: 27px;
  width: 10px;
  height: 10px;
}

.flow-scroll {
  width: 13px;
  border-left: 1px solid #e0e0e0;
  background-color: #fff;
  padding-top: 3px;
  padding-bottom: 1px;
  display: flex;
  flex-direction: column;
  align-items: center;
  gap: 1px;
}

.flow-track {
  flex: 1;
  padding-top: 2px;
}

.flow-thumb {
  width: 8px;
  height: 600px;
  border-radius: 4px;
  background-color: #bdbdbd;
}

.sim {
  flex: 1;
  min-width: 0;
  display: flex;
  flex-direction: column;
}

.sim-head {
  height: 28px;
  flex: none;
  background-color: #c8dcfc;
  padding: 1px 0 0 15px;
  display: flex;
  align-items: center;
  justify-content: space-between;
  font-size: 12px;
}

.sim-head-icons {
  display: flex;
  align-items: center;
  gap: 9px;
  margin-right: 1px;
}

.sim-head-icons b {
  font-size: 16px;
  color: #999;
}

.sim-body {
  flex: 1;
  min-height: 0;
  display: flex;
}

/* vertical tabs */
.side-tabs {
  width: 35px;
  padding: 10px 0 0 9px;
}

.side-tab {
  width: 21px;
  border: 1px solid #aaa;
  border-left: none;
  border-radius: 0 4px 4px 0;
  color: #666;
  font-size: 12.4px;
  padding-bottom: 4px;
  display: flex;
  align-items: flex-end;
  justify-content: center;
}

.side-tab span {
  writing-mode: vertical-rl;
  transform: rotate(180deg);
}

.t-scope { height: 68px; margin-bottom: 2px; }
.t-sources { height: 67px; margin-bottom: 11px; }
.t-objects { height: 64px; }

/* waveform frame */
.frame-col {
  flex: 1;
  min-width: 0;
  padding: 10px 3px 0 0;
  display: flex;
  flex-direction: column;
}

.frame {
  flex: 1;
  min-height: 0;
  border: 3px solid #4d7fd3;
  display: flex;
  flex-direction: column;
}

.tabs {
  height: 28px;
  flex: none;
  background-color: #ececec;
  display: flex;
}

.tab {
  display: flex;
  align-items: center;
  justify-content: space-between;
  padding: 0 3px 0 6px;
  color: #8a8a8a;
  font-weight: bold;
  font-size: 11.8px;
  border-right: 2px solid #d0d0d0;
}

.tab.w1 { width: 101px; }
.tab.w2 { width: 119px; }
.tab.w3 { width: 191px; }
.tab.w4 { width: 95px; }

.tab.active {
  background-color: #fff;
  color: #111;
  font-size: 11.5px;
  padding: 0 6px 0 5px;
  border-right: none;
}

.tabs-right {
  margin-left: auto;
  margin-right: 8px;
  display: flex;
  align-items: center;
  gap: 8px;
}

.tabs-right b {
  width: 12px;
  text-align: center;
  color: #999;
  font-size: 14px;
}

.wave-tools {
  height: 34px;
  flex: none;
  border-bottom: 2px solid #e8e8e8;
  display: flex;
  align-items: center;
}

.wtool {
  width: 35px;
  height: 24px;
  border-right: 1px solid #e2e2e2;
  display: flex;
  align-items: center;
  justify-content: center;
}

.wtool-gear {
  margin-left: auto;
  margin-right: 9px;
  display: flex;
}

.viewer {
  flex: 1;
  min-height: 0;
  display: flex;
}

.signals {
  width: 139px;
  padding-top: 26px;
}

.sig-head {
  display: flex;
  gap: 4px;
  height: 30px;
}

.col-btn {
  background: linear-gradient(#f6f6f6, #e4e4e4);
  border: 1px solid #c4c4c4;
  font-weight: bold;
  font-size: 12px;
  padding-top: 1px;
  display: flex;
  align-items: center;
  justify-content: center;
}

.c-name { width: 59px; padding-left: 4px; }
.c-value { width: 74px; padding-right: 12px; }

.sig-row {
  height: 23px;
  display: flex;
  gap: 8px;
}

.sig-name {
  width: 59px;
  padding-left: 22px;
  display: flex;
  align-items: center;
  gap: 3px;
}

.sig-name svg {
  width: 13px;
  height: 16px;
  margin-left: 1px;
}

.sig-val {
  width: 66px;
  padding-left: 2px;
  display: flex;
  align-items: center;
  border: 1px solid transparent;
}

.selected .sig-name {
  background: linear-gradient(to right, transparent 22px, #c8dcfc 22px);
}

.selected .sig-val {
  background-color: #c8dcfc;
  border-color: #4a9fd8;
}

.waves {
  flex: none;
}

.ruler text,
.cursor-text {
  font-family: "Liberation Mono", monospace;
  font-size: 11.4px;
}

.w-fill {
  fill: #b0b0b0;
}

.w-shade {
  fill: none;
  stroke: #7c7c7c;
  stroke-width: 1;
}

.grid {
  stroke: rgba(0, 0, 0, 0.27);
  stroke-width: 1;
}

.w-line {
  fill: none;
  stroke: #000;
  stroke-width: 1.5;
}

.w-line.thick {
  stroke-width: 2;
}

.cursor {
  stroke: #f5f500;
  stroke-width: 2;
}

.cursor-tag {
  fill: #ffff00;
}

.cursor-text {
  fill: #fff;
}

.v-scroll {
  width: 14px;
  flex: none;
  background-color: #f9f9f9;
  border-left: 1px solid #e6e6e6;
  padding: 3px 0 1px;
  display: flex;
  flex-direction: column;
  align-items: center;
  justify-content: space-between;
}

.h-bars {
  height: 14px;
  flex: none;
  display: flex;
  background-color: #fff;
}

.h-name {
  margin-left: 63px;
  width: 74px;
  background-color: #f9f9f9;
  border-top: 1px solid #e6e6e6;
  padding: 0 1px 0 3px;
  display: flex;
  align-items: center;
  justify-content: space-between;
}

.h-wave {
  margin-left: 4px;
  flex: 1;
  background-color: #f9f9f9;
  border-top: 1px solid #e6e6e6;
  padding: 0 1px 0 3px;
  display: flex;
  align-items: center;
  gap: 4px;
}

.h-track {
  flex: 1;
}

.h-thumb {
  width: 241px;
  height: 8px;
  border-radius: 4px;
  background-color: #bdbdbd;
}

.bottom-tabs {
  height: 27px;
  flex: none;
  padding: 4px 0 0 1px;
  display: flex;
}

.b-tab {
  width: 87px;
  border: 1px solid #aaa;
  border-bottom: none;
  border-radius: 3px 3px 0 0;
  color: #666;
  font-size: 12.4px;
  padding-left: 7px;
  line-height: 23px;
}

.status {
  height: 12px;
  flex: none;
  background-color: #eeeeee;
  overflow: hidden;
  position: relative;
}

.status span {
  position: absolute;
  left: 1492px;
  top: 4px;
}

/* windows taskbar */
.taskbar {
  height: 48px;
  flex: none;
  background: linear-gradient(to right, #1f2228, #1b2130 25%, #13244f 38%, #14244e 62%, #1e2330 75%, #1f2228);
  border-top: 1px solid #3a3f48;
  padding-bottom: 2px;
  color: #f2f2f2;
  font-family: "Open Sans", sans-serif;
  font-size: 12px;
  display: flex;
  align-items: center;
}

.weather {
  width: 523px;
  padding-left: 16px;
  display: flex;
  align-items: center;
  gap: 5px;
}

.sun {
  position: relative;
  width: 30px;
  height: 30px;
  padding-top: 5px;
}

.badge {
  position: absolute;
  right: -1px;
  top: -2px;
  width: 15px;
  height: 15px;
  border-radius: 50%;
  background-color: #ffa3b1;
  color: #222;
  font-size: 11px;
  line-height: 15px;
  text-align: center;
}

.weather-text {
  display: flex;
  flex-direction: column;
  font-size: 11px;
  line-height: 16px;
}

.weather-text span {
  color: #cfcfcf;
}

.start {
  flex: none;
}

.search {
  width: 220px;
  height: 32px;
  margin-left: 13px;
  margin-right: 1px;
  border-radius: 16px;
  background-color: #364268;
  border: 1px solid #46527a;
  padding: 0 6px 0 11px;
  display: flex;
  align-items: center;
  gap: 8px;
  font-size: 13px;
  color: #d5d5d5;
}

.search-art {
  margin-left: auto;
  margin-right: -6px;
}

.app {
  width: 44px;
  display: flex;
  justify-content: center;
}

.pre {
  font-family: "Liberation Sans", sans-serif;
  font-size: 6.5px;
  font-weight: bold;
  fill: #1a1a1a;
  text-anchor: middle;
}

.pinned {
  width: 40px;
  height: 40px;
  border-radius: 4px;
  margin-left: 3px;
  padding-top: 6px;
  display: flex;
  justify-content: center;
  position: relative;
}

.pinned.blue {
  background-color: #1f2f50;
  margin-right: 1px;
}

.pinned.red {
  background-color: #432528;
}

.pinned i {
  position: absolute;
  bottom: 1px;
  height: 3px;
  border-radius: 2px;
}

.pinned.blue i {
  width: 16px;
  background-color: #4cc2ff;
}

.pinned.red i {
  width: 6px;
  background-color: #ff9aa8;
}

.tray {
  margin-left: auto;
  margin-right: 19px;
  display: flex;
  align-items: center;
}

.tray > svg:first-child {
  margin-right: 19px;
}

.lang {
  width: 26px;
  text-align: center;
  line-height: 16px;
  margin-right: 17px;
}

.tray > svg:nth-child(4) {
  margin: 0 8px 0 7px;
}

.clock {
  margin-left: 7px;
  text-align: right;
  line-height: 16px;
}
```
